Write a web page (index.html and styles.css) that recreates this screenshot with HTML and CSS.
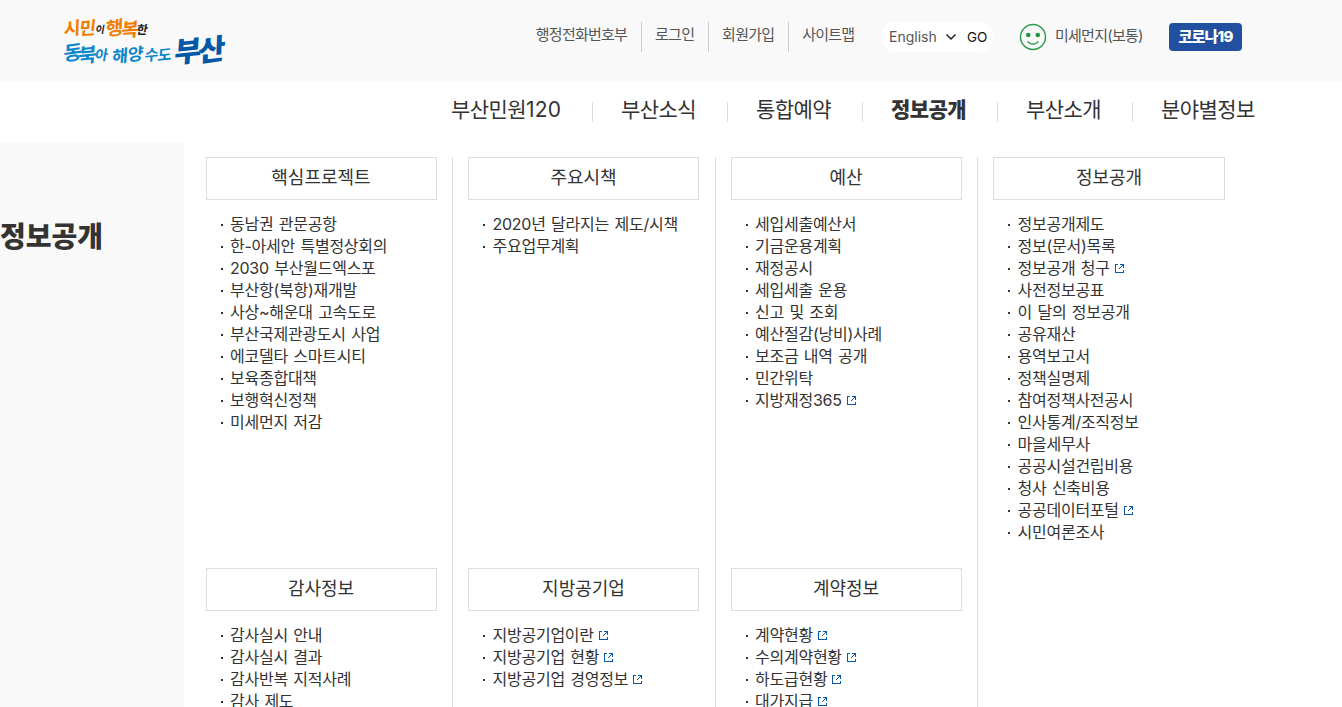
FILE: index.html
```
<!DOCTYPE html>
<html lang="ko">
<head>
    <meta charset="UTF-8">
    <meta name="viewport" content="width=device-width, initial-scale=1.0">
    <title>부산광역시</title>
    <link rel="stylesheet" href="styles.css">
</head>
<body>

    <!-- 외부 링크 아이콘 -->
    <svg class="sprite">
        <symbol id="ext" viewBox="0 0 9 9">
            <path d="M3 .5H.5V8.500H8.500V6M5 .5H8.500V4M8.500 .5L3.500 5.500" fill="none" stroke="#0b57a8"/>
        </symbol>
    </svg>

    <header class="header">
        <a class="logo" href="#">
            <svg width="176" height="60" viewBox="0 0 176 60">
                <g transform="skewX(-10)">
                    <text class="lg orange" x="12 27" y="25 24" rotate="-8 -4" font-size="18">시민</text>
                    <text class="lg black" x="43" y="22" font-size="10">이</text>
                    <text class="lg orange" x="54 69" y="25 26" rotate="-8 -4" font-size="19">행복</text>
                    <text class="lg black" x="84" y="23" font-size="12">한</text>
                    <text class="lg sky" x="16 31" y="50 52" rotate="-8 -6" font-size="20">동북</text>
                    <text class="lg sky" x="47" y="49" font-size="14">아</text>
                    <text class="lg sky" x="65 80" y="52 50" rotate="-6 -6" font-size="17">해양</text>
                    <text class="lg sky" x="97 110" y="50 50" rotate="-6 -6" font-size="15">수도</text>
                    <text class="lg navy" x="127 151" y="52 51" rotate="-6 -8" font-size="29">부산</text>
                </g>
            </svg>
        </a>
        <ul class="util">
            <li><a href="#">행정전화번호부</a></li>
            <li><a href="#">로그인</a></li>
            <li><a href="#">회원가입</a></li>
            <li><a href="#">사이트맵</a></li>
        </ul>
        <div class="lang">
            <span class="lang-name">English</span>
            <svg width="12" height="8" viewBox="0 0 12 8"><path d="M1.500 1.500L6 6L10.500 1.500" fill="none" stroke="#222" stroke-width="1.500"/></svg>
            <button class="go">GO</button>
        </div>
        <a class="dust" href="#">
            <svg width="28" height="28" viewBox="0 0 28 28">
                <circle cx="14" cy="14" r="12.500" fill="none" stroke="#2a9a47" stroke-width="1.400"/>
                <circle cx="9.200" cy="12" r="2.300" fill="#1f963e"/>
                <circle cx="18.800" cy="12" r="2.300" fill="#1f963e"/>
                <path d="M8.500 18.500Q14 24 19.500 18.500" fill="none" stroke="#2a9a47" stroke-width="1.300"/>
            </svg>
            <span>미세먼지(보통)</span>
        </a>
        <a class="corona" href="#">코로나19</a>
    </header>

    <nav class="gnb">
        <a href="#">부산민원<span class="num">120</span></a>
        <a href="#">부산소식</a>
        <a href="#">통합예약</a>
        <a href="#" class="on">정보공개</a>
        <a href="#">부산소개</a>
        <a href="#">분야별정보</a>
    </nav>

    <div class="submenu">
        <h2 class="side">정보공개</h2>
        <div class="grid">
            <section class="cell">
                <h3>핵심프로젝트</h3>
                <ul>
                    <li>동남권 관문공항</li>
                    <li>한-아세안 특별정상회의</li>
                    <li>2030 부산월드엑스포</li>
                    <li>부산항(북항)재개발</li>
                    <li>사상~해운대 고속도로</li>
                    <li>부산국제관광도시 사업</li>
                    <li>에코델타 스마트시티</li>
                    <li>보육종합대책</li>
                    <li>보행혁신정책</li>
                    <li>미세먼지 저감</li>
                </ul>
            </section>
            <section class="cell">
                <h3>주요시책</h3>
                <ul>
                    <li>2020년 달라지는 제도/시책</li>
                    <li>주요업무계획</li>
                </ul>
            </section>
            <section class="cell">
                <h3>예산</h3>
                <ul>
                    <li>세입세출예산서</li>
                    <li>기금운용계획</li>
                    <li>재정공시</li>
                    <li>세입세출 운용</li>
                    <li>신고 및 조회</li>
                    <li>예산절감(낭비)사례</li>
                    <li>보조금 내역 공개</li>
                    <li>민간위탁</li>
                    <li>지방재정365<svg class="ext"><use href="#ext"/></svg></li>
                </ul>
            </section>
            <section class="cell">
                <h3>정보공개</h3>
                <ul>
                    <li>정보공개제도</li>
                    <li>정보(문서)목록</li>
                    <li>정보공개 청구<svg class="ext"><use href="#ext"/></svg></li>
                    <li>사전정보공표</li>
                    <li>이 달의 정보공개</li>
                    <li>공유재산</li>
                    <li>용역보고서</li>
                    <li>정책실명제</li>
                    <li>참여정책사전공시</li>
                    <li>인사통계/조직정보</li>
                    <li>마을세무사</li>
                    <li>공공시설건립비용</li>
                    <li>청사 신축비용</li>
                    <li>공공데이터포털<svg class="ext"><use href="#ext"/></svg></li>
                    <li>시민여론조사</li>
                </ul>
            </section>
            <section class="cell">
                <h3>감사정보</h3>
                <ul>
                    <li>감사실시 안내</li>
                    <li>감사실시 결과</li>
                    <li>감사반복 지적사례</li>
                    <li>감사 제도</li>
                </ul>
            </section>
            <section class="cell">
                <h3>지방공기업</h3>
                <ul>
                    <li>지방공기업이란<svg class="ext"><use href="#ext"/></svg></li>
                    <li>지방공기업 현황<svg class="ext"><use href="#ext"/></svg></li>
                    <li>지방공기업 경영정보<svg class="ext"><use href="#ext"/></svg></li>
                </ul>
            </section>
            <section class="cell">
                <h3>계약정보</h3>
                <ul>
                    <li>계약현황<svg class="ext"><use href="#ext"/></svg></li>
                    <li>수의계약현황<svg class="ext"><use href="#ext"/></svg></li>
                    <li>하도급현황<svg class="ext"><use href="#ext"/></svg></li>
                    <li>대가지급<svg class="ext"><use href="#ext"/></svg></li>
                </ul>
            </section>
        </div>
    </div>

</body>
</html>
```
FILE: styles.css
```
* {
    margin: 0;
    padding: 0;
    box-sizing: border-box;
}

body {
    font-family: Inter, "Noto Sans CJK KR", sans-serif;
    color: #333;
    background: #fff;
    height: 100vh;
    display: flex;
    flex-direction: column;
    overflow: hidden;
}

ul {
    list-style: none;
}

a {
    color: inherit;
    text-decoration: none;
}

.sprite {
    display: none;
}

/* 상단 */
.header {
    flex: none;
    height: 82px;
    padding: 0 100px 0 56px;
    background: #f9f9f9;
    display: flex;
    align-items: flex-start;
    font-size: 15px;
    letter-spacing: -0.75px;
    color: #555;
    white-space: nowrap;
}

.logo {
    margin-top: 11px;
    margin-right: auto;
}

.logo svg {
    display: block;
}

.lg {
    font-family: "Noto Sans CJK KR", sans-serif;
    font-weight: 700;
    letter-spacing: 0;
}

.orange { fill: #f07d00; }
.black { fill: #222; }
.sky { fill: #0a86cb; }
.navy { fill: #0458a8; font-weight: 900; }

.util {
    display: flex;
    margin-top: 22px;
}

.util li {
    height: 30px;
    line-height: 26px;
    padding: 0 13.6px 0 13.3px;
    border-right: 1px solid #ccc;
}

.util li:last-child {
    border-right: 0;
}

.lang {
    display: flex;
    align-items: center;
    width: 112px;
    height: 30px;
    margin: 22px 26px 0 13px;
    padding-left: 8px;
    background: #fff;
    border-radius: 15px;
    letter-spacing: 0;
}

.lang-name {
    width: 56px;
    padding-bottom: 2px;
    font-size: 14px;
}

.go {
    margin-left: 10px;
    border: 0;
    background: none;
    font-family: inherit;
    font-size: 13.5px;
    color: #111;
}

.dust {
    display: flex;
    width: 150px;
    margin-top: 23px;
    line-height: 26px;
}

.dust svg {
    margin-right: 8px;
}

.corona {
    width: 73px;
    height: 28px;
    margin-top: 23px;
    line-height: 28px;
    text-align: center;
    font-weight: 800;
    color: #fff;
    background: #2150a0;
    border-radius: 4px;
}

/* 주메뉴 */
.gnb {
    flex: none;
    display: flex;
    justify-content: flex-end;
    height: 60px;
    padding: 20px 87px 0 0;
    font-size: 21px;
    letter-spacing: -0.6px;
}

.gnb a {
    height: 20px;
    width: 135px;
    line-height: 15px;
    padding-left: 28px;
    border-left: 1px solid #ddd;
    white-space: nowrap;
}

.gnb a:first-child {
    width: 141px;
    padding-left: 0;
    border-left: 0;
}

.gnb a:last-child {
    width: 123px;
}

.gnb .num {
    letter-spacing: 0.2px;
}

.gnb .on {
    font-weight: 900;
}

/* 펼침 메뉴 */
.submenu {
    flex: 1;
    min-height: 0;
    display: flex;
}

.side {
    width: 184px;
    padding-top: 75px;
    background: #f9f9f9;
    font-size: 28px;
    font-weight: 900;
    line-height: 40px;
}

.grid {
    display: grid;
    grid-template-columns: repeat(4, 262.5px);
    align-content: start;
    margin-left: 6.5px;
    padding-top: 15px;
}

.cell {
    padding: 0 15.5px 24px 15px;
    border-right: 1px solid #ddd;
}

.cell:nth-child(4) {
    border-right: 0;
}

.cell h3 {
    height: 43px;
    line-height: 39px;
    border: 1px solid #ddd;
    text-align: center;
    font-size: 18px;
    font-weight: 400;
}

.cell ul {
    padding: 14px 0 0 15px;
}

.cell li {
    display: flex;
    align-items: center;
    height: 22px;
    padding-bottom: 5px;
    font-size: 16px;
    letter-spacing: -0.25px;
    word-spacing: 1.2px;
    white-space: nowrap;
}

.cell li::before {
    content: "";
    width: 2px;
    height: 2px;
    margin: 4px 7.500px 0 0;
    background: #333;
}

.ext {
    width: 9px;
    height: 9px;
    margin: 3px 0 0 5px;
    shape-rendering: crispEdges;
}
```
